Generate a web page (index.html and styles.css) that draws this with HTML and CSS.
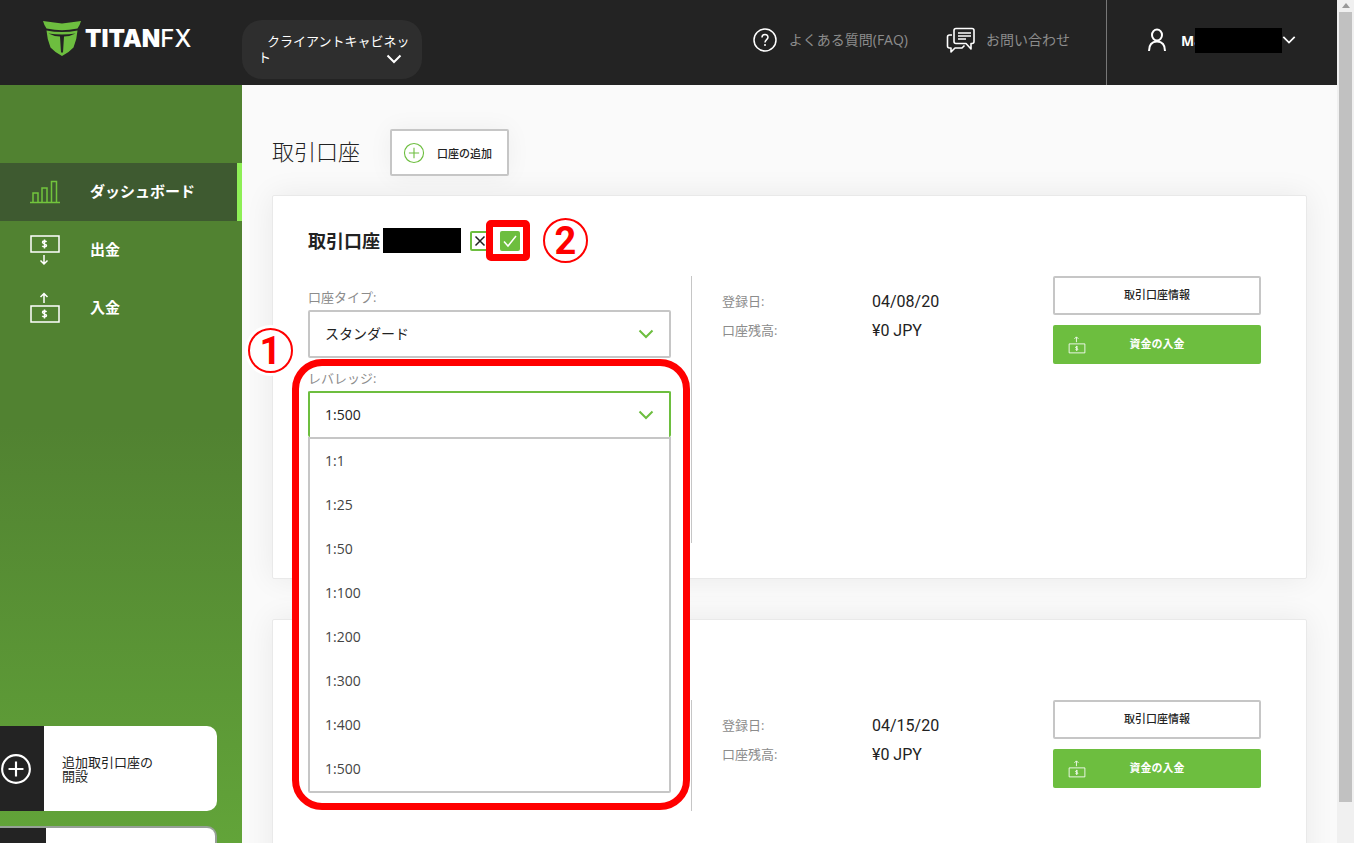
FILE: index.html
```html
<!DOCTYPE html>
<html lang="ja">
<head>
<meta charset="utf-8">
<meta name="viewport" content="width=device-width, initial-scale=1">
<title>TITANFX クライアントキャビネット</title>
<link rel="stylesheet" href="styles.css">
</head>
<body>
<svg class="defs" aria-hidden="true">
  <symbol id="chevron" viewBox="0 0 16 10"><path d="M1.500 1.500 8 8l6.500-6.500" fill="none" stroke="currentColor" stroke-width="2"/></symbol>
  <symbol id="plus" viewBox="0 0 30 30"><circle cx="15" cy="15" r="13" fill="none" stroke="currentColor"/><path d="M15 8v14M8 15h14" fill="none" stroke="currentColor"/></symbol>
  <symbol id="deposit" viewBox="0 0 30 32"><g fill="none" stroke="currentColor"><path d="M1 14h28v16H1zM14 11V2M10.500 5 14 1.500 17.500 5"/><path d="M16.500 20c-1-1.500-4-1.200-4 .3 0 2 4 1.200 4 3.300 0 1.600-3.200 1.700-4.200.2M14.500 17.500v9"/></g></symbol>
  <symbol id="withdraw" viewBox="0 0 30 32"><g fill="none" stroke="currentColor"><path d="M1 2h28v16H1zM14 21v9M10.500 26.500 14 30l3.500-3.500"/><path d="M16.500 8c-1-1.500-4-1.200-4 .3 0 2 4 1.200 4 3.300 0 1.600-3.200 1.700-4.200.2M14.500 5.500v9"/></g></symbol>
</svg>
<div class="window">
  <div class="page">
    <header class="topbar">
      <a class="logo" href="#" aria-label="TITANFX">
        <svg class="logo-mark" viewBox="0 0 38 36" aria-hidden="true"><path fill="#6dbe3f" d="M0 0q9 1 19 2.500Q29 1 38 0q-1 4-3.500 7.500Q26 9.300 19 9.300T3.500 7.500Q1 4 0 0z"/><path fill="#6dbe3f" d="M3.500 9.500Q11 11 19 11t15.500-1.500Q34 18 30.500 26.500 26 31.500 19 35 12 31.500 7.500 26.500 4 18 3.500 9.500z"/><path fill="#232323" d="M5.500 12.500Q12 13.600 19 13.600t13.500-1.100Q27 15.500 21 15.500L20 31.500h-2L17 15.500Q11 15.500 5.500 12.500z"/></svg>
        <span class="logo-text">TITAN<span class="logo-thin">FX</span></span>
      </a>
      <button class="cabinet" type="button">クライアントキャビネット<svg class="chevron"><use href="#chevron"/></svg></button>
      <nav class="help">
        <a href="#"><svg class="icon-help" viewBox="0 0 24 24" aria-hidden="true"><g fill="none" stroke="#fff" stroke-width="1.500"><circle cx="12" cy="12" r="11"/><path d="M9 9.500C9 5.500 15 5.500 15 9.200c0 2.300-3 2.600-3 5.300"/></g><circle cx="12" cy="17" r="1" fill="#fff"/></svg><span>よくある質問(FAQ)</span></a>
        <a href="#"><svg class="icon-chat" viewBox="0 0 30 26" aria-hidden="true"><g fill="none" stroke="#fff" stroke-width="1.600" stroke-linejoin="round"><path d="M10 1.500h16q2 0 2 2v11q0 2-2 2h-1V22l-5-5.500H10q-2 0-2-2v-11q0-2 2-2z"/><path d="M6 8H3.500q-2 0-2 2v9q0 2 2 2H5v4l4-4h7l2.500-2.500M12 6h13M12 9h13M12 12h8"/></g></svg><span>お問い合わせ</span></a>
      </nav>
      <button class="account" type="button">
        <svg class="icon-user" viewBox="0 0 20 24" aria-hidden="true"><g fill="none" stroke="#fff" stroke-width="2"><ellipse cx="10" cy="7" rx="5" ry="5.500"/><path d="M2 23c0-7 3-9.500 8-9.500s8 2.500 8 9.500"/></g></svg>
        <span class="name">Ma</span><span class="redact"></span>
        <svg class="chevron"><use href="#chevron"/></svg>
      </button>
    </header>
    <div class="columns">
      <aside class="sidebar">
        <nav class="menu">
          <a class="active" href="#"><svg viewBox="0 0 30 32" aria-hidden="true"><path d="M0 26.500h30M3 26v-9h5v9M12 26V12h5v14M21.500 26V5.500h5V26" fill="none" stroke="#72c53c" stroke-width="1.500"/></svg><span>ダッシュボード</span></a>
          <a href="#"><svg><use href="#withdraw"/></svg><span>出金</span></a>
          <a href="#"><svg><use href="#deposit"/></svg><span>入金</span></a>
        </nav>
        <div class="promos">
          <a class="promo" href="#"><span class="promo-icon"><svg><use href="#plus"/></svg></span><span class="promo-text">追加取引口座の<br>開設</span></a>
          <a class="promo outlined" href="#" aria-label="次の項目"><span class="promo-icon"></span></a>
        </div>
      </aside>
      <main class="content">
        <div class="heading">
          <h1>取引口座</h1>
          <button class="add" type="button"><svg><use href="#plus"/></svg>口座の追加</button>
        </div>
        <section class="card">
          <div class="card-title">
            <h2>取引口座</h2><span class="redact"></span>
            <button class="mini cancel" type="button" aria-label="キャンセル"><svg viewBox="0 0 16 16"><path d="M3.500 3.500l9 9M12.500 3.500l-9 9" stroke="#222" stroke-width="1.500"/></svg></button>
            <span class="confirm"><button class="mini ok" type="button" aria-label="確認"><svg viewBox="0 0 20 20"><path d="M4 10.500l4 4.500 8-10" fill="none" stroke="#fff" stroke-width="1.500"/></svg></button></span>
            <span class="step">2</span>
          </div>
          <div class="card-body">
            <div class="settings">
              <div class="field">
                <label for="type">口座タイプ:</label>
                <div class="select"><select id="type"><option>スタンダード</option></select><svg class="chevron"><use href="#chevron"/></svg></div>
              </div>
              <div class="field open">
                <label for="leverage">レバレッジ:</label>
                <div class="select">
                  <select id="leverage"><option>1:500</option></select><svg class="chevron"><use href="#chevron"/></svg>
                  <ul class="options">
                    <li>1:1</li><li>1:25</li><li>1:50</li><li>1:100</li><li>1:200</li><li>1:300</li><li>1:400</li><li>1:500</li>
                  </ul>
                </div>
                <span class="frame"></span>
                <span class="step step-one">1</span>
              </div>
            </div>
            <dl class="info">
              <dt>登録日:</dt><dd>04/08/20</dd>
              <dt>口座残高:</dt><dd>¥0 JPY</dd>
            </dl>
            <div class="actions">
              <button class="plain" type="button">取引口座情報</button>
              <button class="fund" type="button"><svg><use href="#deposit"/></svg>資金の入金</button>
            </div>
          </div>
        </section>
        <section class="card second">
          <div class="card-title"></div>
          <div class="card-body">
            <div class="settings"></div>
            <dl class="info">
              <dt>登録日:</dt><dd>04/15/20</dd>
              <dt>口座残高:</dt><dd>¥0 JPY</dd>
            </dl>
            <div class="actions">
              <button class="plain" type="button">取引口座情報</button>
              <button class="fund" type="button"><svg><use href="#deposit"/></svg>資金の入金</button>
            </div>
          </div>
        </section>
      </main>
    </div>
  </div>
  <div class="scrollbar"><span class="arrow"></span><span class="thumb"></span></div>
</div>
</body>
</html>
```
FILE: styles.css
```css
* { box-sizing: border-box; }
body {
  margin: 0;
  font-family: "Open Sans", "Noto Sans CJK JP", sans-serif;
  font-size: 13px;
  color: #222;
  background: #fafafa;
}
h1, h2, dl, dd, ul { margin: 0; padding: 0; }
a { color: inherit; text-decoration: none; }
button, select { font: inherit; color: inherit; }
button { padding: 0; border: 0; background: none; cursor: pointer; }
svg { display: block; flex: none; }
.defs { position: absolute; width: 0; height: 0; }
.redact { background: #000; flex: none; }

.window { display: flex; height: 100vh; overflow: hidden; }
.page { flex: 1; min-width: 0; display: flex; flex-direction: column; }

/* Scrollbar */
.scrollbar { width: 17px; background: #f0f0f0; display: flex; flex-direction: column; align-items: center; padding-bottom: 41px; }
.arrow { margin: 3px 0 4px; border: 4px solid transparent; border-top: 0; border-bottom: 5px solid #999; }
.thumb { flex: 1; width: 13px; background: #c1c1c1; }

/* Header */
.topbar { display: flex; align-items: stretch; height: 85px; flex: none; background: #232323; color: #fff; }
.logo { display: flex; align-items: center; width: 242px; padding: 0 0 7px 43px; gap: 4px; }
.logo-mark { width: 38px; height: 36px; }
.logo-text { font-family: Inter, sans-serif; font-weight: 900; font-size: 24px; line-height: 30px; }
.logo-thin { font-weight: 500; }
.cabinet {
  position: relative;
  align-self: flex-start;
  width: 180px;
  height: 59px;
  margin-top: 20px;
  padding: 0 12px 2px 16px;
  text-align: left;
  text-indent: 9px;
  line-height: 16px;
  border-radius: 20px;
  background: #2e2e2e;
}
.chevron { width: 16px; height: 10px; }
.cabinet .chevron { position: absolute; right: 20px; bottom: 15px; }
.help { margin-left: auto; display: flex; align-items: center; gap: 38px; padding: 0 36px 6px 0; color: #8c8c8c; font-size: 14px; }
.help a { display: flex; align-items: center; white-space: nowrap; }
.help span { padding-bottom: 2px; }
.icon-help { width: 24px; height: 24px; margin-right: 12px; }
.icon-chat { width: 30px; height: 26px; margin-right: 10px; }
.account { display: flex; align-items: center; width: 231px; padding: 0 0 5px 40px; border-left: 1px solid #777; font-weight: 700; font-size: 14px; }
.icon-user { width: 20px; height: 24px; margin-right: 14px; }
.account .name { flex: none; }
.account .redact { position: relative; width: 87px; height: 25px; margin-left: -8px; }
.account .chevron { flex: none; width: 14px; }

/* Sidebar */
.columns { display: flex; flex: 1; min-height: 0; }
.sidebar { display: flex; flex-direction: column; width: 242px; flex: none; padding-top: 78px; background: linear-gradient(#518231 45%, #62a439); color: #fff; }
.menu a { display: flex; align-items: center; height: 58px; padding-left: 30px; gap: 30px; font-weight: 700; font-size: 15px; }
.menu a.active { background: #3e5a30; border-right: 5px solid #8eef56; }
.menu span { padding-bottom: 3px; }
.menu svg { width: 30px; height: 32px; stroke-width: 1.500; }
.promos { display: flex; flex-direction: column; gap: 15px; width: 217px; margin-top: auto; margin-bottom: -68px; }
.promo { display: flex; height: 85px; border-radius: 0 10px 10px 0; overflow: hidden; background: #fff; color: #222; font-size: 13px; line-height: 14px; }
.promo.outlined { border: solid #96a096; border-width: 2px 2px 2px 0; }
.promo-icon { display: flex; align-items: center; width: 44px; flex: none; background: #232323; color: #fff; }
.promo-icon svg { width: 32px; height: 32px; stroke-width: 2; }
.outlined .promo-icon { width: 46px; }
.promo-text { align-self: center; padding-left: 18px; }

/* Content */
.content { flex: 1; min-width: 0; padding: 44px 30px 0; overflow: hidden; }
.heading { display: flex; align-items: center; gap: 30px; margin-bottom: 19px; }
h1 { font-size: 22px; font-weight: 300; line-height: 32px; padding-bottom: 4px; }
.add { display: flex; align-items: center; width: 119px; height: 47px; padding-left: 11px; gap: 12px; border: 2px solid #c6c6c6; border-radius: 2px; background: #fff; box-shadow: 0 0 25px #0000000d; font-size: 11px; font-weight: 500; white-space: nowrap; }
.add svg { width: 22px; height: 22px; color: #6dbe3f; stroke-width: 1.500; }
.card { height: 384px; margin-bottom: 40px; padding: 24px 45px 0 35px; border: 1px solid #e9e9e9; border-radius: 2px; background: #fff; box-shadow: 0 0 30px #00000012; }
.card-title { position: relative; display: flex; align-items: center; height: 41px; margin-bottom: 15px; }
h2 { font-size: 18px; font-weight: 700; line-height: 26px; margin-right: 3px; }
.card-title .redact { width: 78px; height: 25px; }
.mini { width: 20px; height: 20px; border-radius: 2px; flex: none; }
.cancel { margin-left: 9px; border: 2px solid #6dbe3f; }
.mini svg { width: 100%; height: 100%; }
.ok { background: #6dbe3f; }
.confirm { position: relative; margin-left: -4px; padding-left: 3px; border: 7px solid #f00; border-radius: 5px; background: #fff; width: 44px; height: 41px; display: flex; align-items: center; justify-content: center; }
.step { display: flex; align-items: center; justify-content: center; width: 45px; height: 45px; margin-left: 13px; border: 2px solid #f00; border-radius: 50%; background: #fff; color: #f00; font: 700 38px/40px Roboto, sans-serif; }
.card-body { display: grid; grid-template-columns: 363px 1fr 208px; min-height: 267px; }
.second .card-body { min-height: 111px; }

.field { position: relative; }
.field label { display: block; height: 34px; padding-top: 11px; line-height: 20px; color: #8c8c8c; }
.open label { height: 33px; padding-top: 10px; }
.select { position: relative; }
.select select { display: block; width: 100%; height: 48px; padding: 0 15px 2px; appearance: none; border: 2px solid #c6c6c6; border-radius: 2px; background: #fff; font-size: 14px; }
.open select { height: 46px; border-color: #6dbe3f; border-bottom: 0; }
.select .chevron { position: absolute; right: 17px; top: 19px; color: #6dbe3f; pointer-events: none; }
.options { position: absolute; z-index: 2; top: 100%; left: 0; right: 0; list-style: none; border: 2px solid #c6c6c6; border-radius: 0 0 2px 2px; background: #fff; font-size: 14px; color: #444; }
.options li { height: 44px; padding-left: 15px; line-height: 44px; }
.frame { position: absolute; z-index: 1; left: -16px; top: 1px; width: 398px; height: 451px; border: 7px solid #f00; border-radius: 30px; box-shadow: inset 0 0 0 12px #fff; }
.open label, .open .select { z-index: 3; position: relative; }
.step-one { position: absolute; z-index: 2; left: -60px; top: -30px; margin: 0; box-shadow: 0 0 0 3px #fff; }

.info { display: grid; grid-template-columns: 150px 1fr; grid-auto-rows: 29px; align-content: start; margin-left: 20px; padding: 11px 0 0 30px; border-left: 1px solid #c6c6c6; line-height: 29px; }
.info dt { color: #8c8c8c; }
.info dd { font-family: Roboto, sans-serif; font-size: 16px; }
.actions { display: flex; flex-direction: column; gap: 10px; }
.actions button { height: 39px; padding-bottom: 3px; border-radius: 2px; font-size: 11px; font-weight: 500; }
.actions .plain { border: 2px solid #c6c6c6; background: #fff; }
.actions .fund { position: relative; background: #6dbe3f; color: #fff; font-weight: 700; }
.fund svg { position: absolute; left: 15px; top: 11px; width: 18px; height: 18px; stroke-width: 1.500; }
```
